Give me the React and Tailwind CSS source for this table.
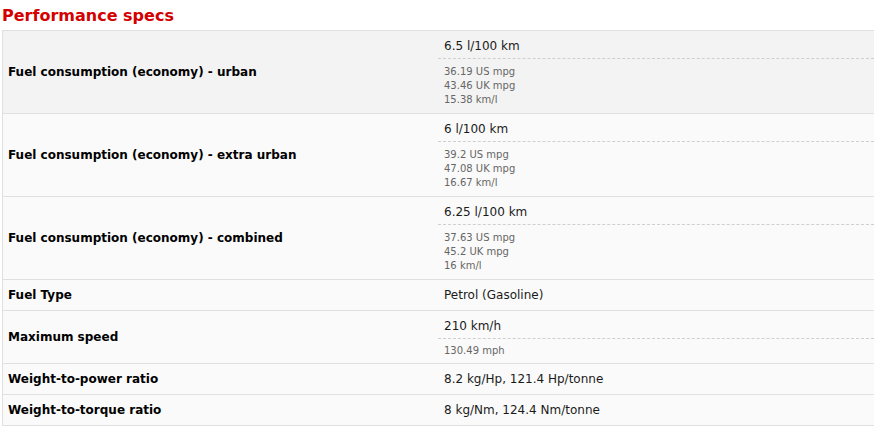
const rows = [
  {
    label: "Fuel consumption (economy) - urban",
    value: "6.5 l/100 km",
    sub: ["36.19 US mpg", "43.46 UK mpg", "15.38 km/l"],
    shaded: true,
  },
  {
    label: "Fuel consumption (economy) - extra urban",
    value: "6 l/100 km",
    sub: ["39.2 US mpg", "47.08 UK mpg", "16.67 km/l"],
  },
  {
    label: "Fuel consumption (economy) - combined",
    value: "6.25 l/100 km",
    sub: ["37.63 US mpg", "45.2 UK mpg", "16 km/l"],
  },
  { label: "Fuel Type", value: "Petrol (Gasoline)" },
  { label: "Maximum speed", value: "210 km/h", sub: ["130.49 mph"] },
  { label: "Weight-to-power ratio", value: "8.2 kg/Hp, 121.4 Hp/tonne" },
  { label: "Weight-to-torque ratio", value: "8 kg/Nm, 124.4 Nm/tonne" },
];

function SpecRow({ label, value, sub, shaded }) {
  return (
    <div
      className={`flex border-b border-[#e0e0e0] ${
        shaded ? "bg-[#f3f3f3]" : "bg-[#fafafa]"
      }`}
    >
      <div className="w-[435px] shrink-0 flex items-center pl-[5px] text-[12px] font-bold text-black">
        {label}
      </div>
      <div className="flex-1">
        {sub ? (
          <>
            <div className="pl-[6px] pt-[7px] pb-[3px] leading-[17px] text-[12px] text-[#1a1a1a]">
              {value}
            </div>
            <div
              className={`border-t border-dashed border-[#cfcfcf] pl-[6px] text-[10px] leading-[14px] text-[#666] ${
                sub.length > 1 ? "py-[6px]" : "py-[5px]"
              }`}
            >
              {sub.map((s) => (
                <div key={s}>{s}</div>
              ))}
            </div>
          </>
        ) : (
          <div className="pl-[6px] py-[7px] leading-[16px] text-[12px] text-[#1a1a1a]">
            {value}
          </div>
        )}
      </div>
    </div>
  );
}

export default function App() {
  return (
    <div className="bg-white w-[874px] h-[432px] overflow-hidden pl-[2px] pt-[4px] font-['DejaVu_Sans','Verdana',sans-serif]">
      <h2 className="text-[16px] font-bold text-[#d40000] leading-[24px] mb-[2px]">
        Performance specs
      </h2>
      <div className="border-l border-t border-[#e0e0e0]">
        {rows.map((r) => (
          <SpecRow key={r.label} {...r} />
        ))}
      </div>
    </div>
  );
}
